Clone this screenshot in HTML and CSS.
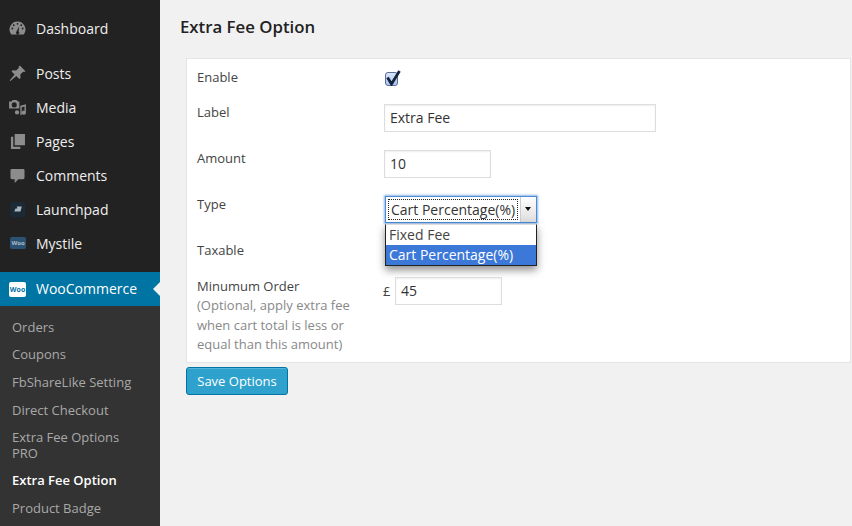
FILE: index.html
```html
<!DOCTYPE html>
<html lang="en">
<head>
    <meta charset="UTF-8">
    <title>Extra Fee Option</title>
    <link rel="stylesheet" href="styles.css">
</head>
<body>

<div class="wrap">

    <div class="sidebar">
        <ul class="menu menu-first">
            <li>
                <svg class="icon" viewBox="0 0 20 20"><path fill-rule="evenodd" d="M10 2.500a8.500 8.500 0 0 0-7 13.300c.3.500.8.700 1.300.700h11.400c.5 0 1-.2 1.300-.7A8.500 8.500 0 0 0 10 2.500zM10 4a1 1 0 1 1 0 2 1 1 0 0 1 0-2zM6 5.500a1 1 0 1 1 0 2 1 1 0 0 1 0-2zm8 0a1 1 0 1 1 0 2 1 1 0 0 1 0-2zM4.500 9a1 1 0 1 1 0 2 1 1 0 0 1 0-2zm11 0a1 1 0 1 1 0 2 1 1 0 0 1 0-2zM11.800 7.500l-.6 5.600a1.800 1.800 0 1 1-2.300.2z"/></svg>
                Dashboard
            </li>
        </ul>
        <ul class="menu menu-second">
            <li>
                <svg class="icon" viewBox="0 0 20 20"><path d="M12.500 1.500l6 6-1.300 1-1.200-.4-3 3 .3 3.600-1.300 1.300-3.300-3.300L2.500 18l-.9-.4 5.300-6.400-3.300-3.300L4.900 6.600l3.600.3 3-3-.3-1.200z"/></svg>
                Posts
            </li>
            <li>
                <svg class="icon" viewBox="0 0 20 20"><path fill-rule="evenodd" d="M1 3.500h2.500L5 2h4l1.500 1.500H12V11H1zM6.500 4.500a2.700 2.700 0 1 0 0 5.400 2.700 2.700 0 0 0 0-5.400z"/><path d="M13 8l6-1.500v9a2.200 2.200 0 1 1-1.500-2V9l-3 .7V18h-1.500zM9.500 13a2.300 2.300 0 1 1 0 4.600 2.300 2.300 0 0 1 0-4.600z"/></svg>
                Media
            </li>
            <li>
                <svg class="icon" viewBox="0 0 20 20"><path d="M7 2h11v12H7z"/><path d="M5.500 5H3v13h10v-2.500H5.500z"/></svg>
                Pages
            </li>
            <li>
                <svg class="icon" viewBox="0 0 20 20"><path d="M4 3h12a1.500 1.500 0 0 1 1.500 1.500v8A1.500 1.500 0 0 1 16 14h-5l-4 4v-4H4a1.500 1.500 0 0 1-1.500-1.500v-8A1.500 1.500 0 0 1 4 3z"/></svg>
                Comments
            </li>
            <li>
                <span class="badge-launch"><svg viewBox="0 0 16 16"><path d="M6 4h8l-2 8H2l2-5h3z"/></svg></span>
                Launchpad
            </li>
            <li>
                <span class="badge-woo badge-dark">Woo</span>
                Mystile
            </li>
        </ul>

        <div class="menu-active">
            <span class="badge-woo">Woo</span>
            <span class="menu-active-text">WooCommerce</span>
        </div>

        <ul class="submenu">
            <li>Orders</li>
            <li>Coupons</li>
            <li>FbShareLike Setting</li>
            <li>Direct Checkout</li>
            <li>Extra Fee Options PRO</li>
            <li class="current">Extra Fee Option</li>
            <li>Product Badge</li>
        </ul>
    </div>

    <div class="content">
        <h2>Extra Fee Option</h2>

        <form class="card">
            <div class="row row-enable">
                <div class="row-label">Enable</div>
                <div class="row-field">
                    <span class="check">
                        <svg viewBox="0 0 16 16"><path d="M2.500 7.500l4 6.500 8-13"/></svg>
                    </span>
                </div>
            </div>
            <div class="row">
                <div class="row-label">Label</div>
                <div class="row-field"><div class="input input-wide">Extra Fee</div></div>
            </div>
            <div class="row">
                <div class="row-label">Amount</div>
                <div class="row-field"><div class="input input-small">10</div></div>
            </div>
            <div class="row">
                <div class="row-label">Type</div>
                <div class="row-field">
                    <div class="select">
                        <span class="select-value"><span class="select-focus">Cart Percentage(%)</span></span>
                        <span class="select-arrow"></span>
                    </div>
                    <ul class="dropdown">
                        <li>Fixed Fee</li>
                        <li class="selected">Cart Percentage(%)</li>
                    </ul>
                </div>
            </div>
            <div class="row row-taxable">
                <div class="row-label">Taxable</div>
                <div class="row-field"></div>
            </div>
            <div class="row row-last">
                <div class="row-label">
                    Minumum Order
                    <span class="hint">(Optional, apply extra fee when cart total is less or equal than this amount)</span>
                </div>
                <div class="row-field row-currency">
                    <span class="currency">£</span>
                    <div class="input input-small">45</div>
                </div>
            </div>
        </form>

        <button type="button" class="btn-save">Save Options</button>
    </div>

</div>

</body>
</html>
```

FILE: styles.css
```css
body {
    margin: 0;
    background-color: #f1f1f1;
    font-family: "Open Sans", sans-serif;
    font-size: 13px;
    color: #444;
}
ul {
    list-style: none;
    margin: 0;
    padding: 0;
}
.wrap {
    display: flex;
    height: 526px;
    overflow: hidden;
}

/* menu lateral */
.sidebar {
    width: 160px;
    flex-shrink: 0;
    background-color: #222;
}
.menu {
    color: #eee;
    font-size: 14px;
}
.menu-first {
    padding-top: 11px;
}
.menu-second {
    padding-top: 11px;
    padding-bottom: 12px;
}
.menu li,
.menu-active {
    display: flex;
    align-items: center;
    gap: 10px;
    height: 34px;
    padding-left: 9px;
}
.icon {
    width: 17px;
    height: 17px;
    flex-shrink: 0;
    fill: #8c8c8c;
    transform: scale(1.1);
}
.badge-launch {
    display: flex;
    align-items: center;
    justify-content: center;
    width: 15px;
    height: 15px;
    margin-left: 1px;
    margin-right: 1px;
    background-color: #1c2a38;
    border-radius: 2px;
}
.badge-launch svg {
    width: 10px;
    height: 10px;
    fill: #a9b4bd;
}
.badge-woo {
    display: flex;
    align-items: center;
    justify-content: center;
    width: 16px;
    height: 12px;
    margin-left: 1px;
    background-color: #fff;
    border-radius: 2px;
    color: #0074a2;
    font-size: 6px;
    font-weight: 700;
}
.badge-dark {
    background-color: #2c5273;
    color: #a9b9c6;
}
.menu-active {
    position: relative;
    background-color: #0074a2;
    color: #fff;
    font-size: 14px;
}
.menu-active .badge-woo {
    width: 17px;
    height: 15px;
    margin-left: 0;
    font-size: 7px;
}
.menu-active-text {
    padding-bottom: 2px;
}
.menu-active::after {
    content: "";
    position: absolute;
    right: 0;
    top: 10px;
    border: 7px solid transparent;
    border-right-color: #f1f1f1;
    border-left-width: 0;
}
.submenu {
    background-color: #333;
    padding: 7.800px 0 7px;
    color: #a9a9a9;
    font-size: 13px;
    line-height: 15.600px;
}
.submenu li {
    padding: 6px 20px 6px 12px;
}
.submenu .current {
    color: #fff;
    font-weight: 600;
}

/* conteudo */
.content {
    flex: 1;
    padding: 0 1px 0 26px;
    min-width: 0;
}
h2 {
    margin: 16px 0 20px -6px;
    font-size: 16.800px;
    line-height: 22px;
    font-weight: 600;
    color: #222;
}
.card {
    background-color: #fff;
    border: 1px solid #e5e5e5;
    padding: 9px 0 7px 10px;
    display: flex;
    flex-direction: column;
    gap: 16px;
}
.row {
    display: flex;
    align-items: flex-start;
    line-height: 19.500px;
    min-height: 30px;
}
.row-enable {
    min-height: 18.500px;
    height: 18.500px;
}
.row-taxable {
    min-height: 20px;
}
.row-label {
    width: 187px;
    flex-shrink: 0;
    padding-right: 20px;
    box-sizing: border-box;
}
.hint {
    display: block;
    color: #888;
}
.row-field {
    position: relative;
    padding-top: 1px;
}
.check {
    display: block;
    box-sizing: border-box;
    width: 13px;
    height: 14px;
    margin: 3px 0 0 1px;
    position: relative;
    background: linear-gradient(#dbe6f7, #a9c4ee);
    border: 1px solid #5a6e9c;
    border-radius: 3px;
}
.check svg {
    position: absolute;
    left: -1px;
    top: -3px;
    width: 16px;
    height: 16px;
    fill: none;
    stroke: #14243f;
    stroke-width: 2.800;
}
.input {
    box-sizing: border-box;
    height: 28px;
    padding: 0 5px;
    line-height: 26px;
    font-size: 14px;
    color: #333;
    background-color: #fff;
    border: 1px solid #ddd;
    box-shadow: inset 0 1px 2px rgba(0, 0, 0, 0.07);
}
.input-wide {
    width: 272px;
}
.input-small {
    width: 107px;
}
.row-currency {
    display: flex;
    gap: 5px;
    line-height: 28px;
    padding-top: 0;
}
.currency {
    width: 6px;
    margin-left: -1px;
    margin-right: 1px;
}

/* select aberto */
.select {
    display: flex;
    box-sizing: border-box;
    width: 152px;
    height: 27px;
    margin-left: 1px;
    background-color: #fff;
    border: 1px solid #4d8bd6;
    box-shadow: 0 0 2px 1px #8db6e6;
    font-size: 14px;
    color: #333;
}
.select-value {
    flex: 1;
    padding: 2px;
}
.select-focus {
    display: block;
    height: 21px;
    box-sizing: border-box;
    line-height: 19px;
    padding-left: 2px;
    border: 1px dotted #222;
    white-space: nowrap;
}
.select-arrow {
    position: relative;
    width: 15px;
    background: linear-gradient(#fff, #ddd);
    border-left: 1px solid #ccc;
}
.select-arrow::after {
    content: "";
    position: absolute;
    left: 4px;
    top: 10px;
    border: 3px solid transparent;
    border-top: 4px solid #111;
    border-bottom-width: 0;
}
.dropdown {
    position: absolute;
    left: 1px;
    top: 29px;
    width: 150px;
    background-color: #fff;
    border: 1px solid #222;
    border-top-color: #ddd;
    box-shadow: 0 4px 8px rgba(0, 0, 0, 0.45);
    font-size: 14px;
    line-height: 20px;
    color: #444;
}
.dropdown li {
    padding-left: 3px;
    white-space: nowrap;
}
.dropdown .selected {
    background-color: #3c78d8;
    color: #fff;
}
.btn-save {
    display: block;
    margin-top: 4px;
    width: 102px;
    height: 28px;
    padding: 0;
    background-color: #2ea2cc;
    border: 1px solid #0074a2;
    border-radius: 3px;
    box-shadow: inset 0 1px 0 rgba(120, 200, 230, 0.5);
    color: #fff;
    font-family: "Open Sans", sans-serif;
    font-size: 13px;
    cursor: pointer;
}
```
